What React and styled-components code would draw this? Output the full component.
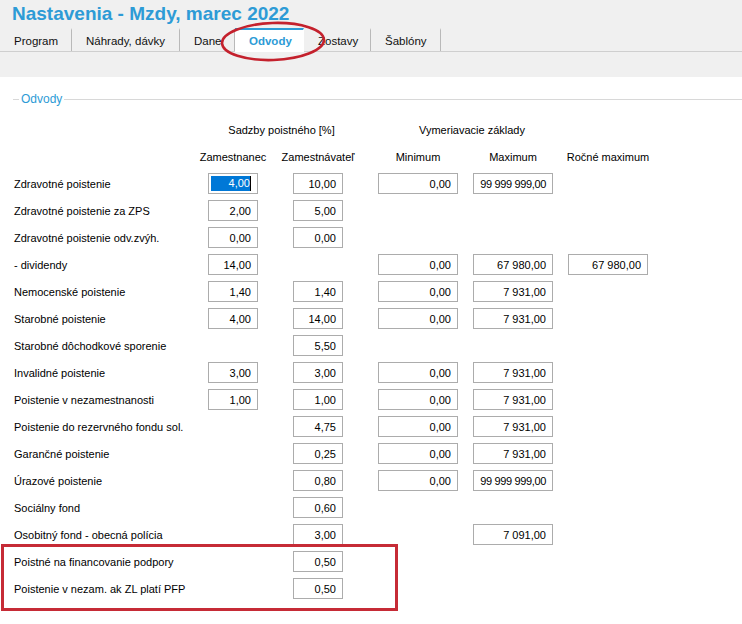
import React from "react";
import styled, { createGlobalStyle } from "styled-components";

const GlobalStyle = createGlobalStyle`
  body {
    margin: 0;
    background: #fff;
  }
`;

const BLUE = "#2d9bd6";

const Page = styled.div`
  position: relative;
  width: 742px;
  height: 624px;
  overflow: hidden;
  background: #fff;
  color: #000;
  font-family: "Liberation Sans", Arial, sans-serif;
`;

const Header = styled.header`
  background: #f0f0f0;
`;

const Title = styled.h1`
  margin: 0;
  height: 28px;
  padding-left: 12px;
  font-size: 19px;
  line-height: 28px;
  font-weight: bold;
  color: ${BLUE};
`;

const TabBar = styled.nav`
  display: flex;
  height: 23px;
  border-bottom: 1px solid #cfcfcf;
`;

const Tab = styled.div`
  width: ${(p) => p.$w}px;
  box-sizing: border-box;
  display: flex;
  align-items: center;
  padding-left: 14px;
  font-size: 11.5px;
  color: ${(p) => (p.$active ? BLUE : "#111")};
  font-weight: ${(p) => (p.$active ? "bold" : "normal")};
  background: ${(p) => (p.$active ? "#fff" : "transparent")};
  border-top: 2px solid ${(p) => (p.$active ? BLUE : "transparent")};
  border-right: 1px solid ${(p) => (p.$active ? "transparent" : "#b9b9b9")};
  margin-bottom: ${(p) => (p.$active ? "-1px" : "0")};
`;

const Band = styled.div`
  height: 25px;
  background: #f0f0f0;
`;

const Content = styled.section`
  padding-top: 15px;
`;

const GroupTitle = styled.div`
  display: flex;
  align-items: center;
  height: 14px;
  font-size: 12px;
  color: ${BLUE};
  &::before,
  &::after {
    content: "";
    height: 1px;
    background: #d8d8d8;
  }
  &::before {
    width: 6px;
    margin: 0 2px 0 13px;
  }
  &::after {
    flex: 1;
    margin-left: 2px;
  }
`;

const Grid = styled.div`
  display: grid;
  grid-template-columns: 194px 50px 85px 115px 95px 95px;
  grid-auto-rows: 27px;
  align-items: center;
  margin-top: 10px;
  padding-left: 14px;
  font-size: 11px;
`;

const Label = styled.div`
  grid-column: 1;
  white-space: nowrap;
`;

const GroupHead = styled.div`
  grid-column: ${(p) => p.$cols};
  justify-self: stretch;
  text-align: center;
  padding-left: ${(p) => p.$offset}px;
  white-space: nowrap;
`;

const ColHead = styled.div`
  grid-column: ${(p) => p.$col};
  justify-self: end;
  width: ${(p) => p.$w}px;
  display: flex;
  justify-content: center;
  white-space: nowrap;
`;

const Field = styled.div`
  grid-column: ${(p) => p.$col};
  justify-self: end;
  width: ${(p) => p.$w}px;
  height: 21px;
  box-sizing: border-box;
  border: 1px solid #acacac;
  background: #fff;
  display: flex;
  align-items: center;
  justify-content: flex-end;
  padding-right: 6px;
  white-space: nowrap;
  letter-spacing: ${(p) => (p.$tight ? "-0.35px" : "0")};
`;

const Selected = styled.span`
  flex: 1;
  height: 15px;
  margin-left: 2px;
  background: #0078d7;
  color: #fff;
  text-align: right;
  line-height: 15px;
  border-right: 1px solid #000;
`;

const Frame = styled.div`
  position: absolute;
  left: 1px;
  top: 544px;
  width: 397px;
  height: 67px;
  box-sizing: border-box;
  border: 3px solid #c62b36;
  pointer-events: none;
`;

const Circle = styled.svg`
  position: absolute;
  left: 218px;
  top: 19px;
  pointer-events: none;
`;

const tabs = [
  { name: "Program", w: 72 },
  { name: "Náhrady, dávky", w: 108 },
  { name: "Dane", w: 55 },
  { name: "Odvody", w: 69, active: true },
  { name: "Zostavy", w: 67 },
  { name: "Šablóny", w: 70 },
];

const widths = [50, 50, 80, 80, 80];

const rows = [
  ["Zdravotné poistenie", ["4,00", "10,00", "0,00", "99 999 999,00", null]],
  ["Zdravotné poistenie za ZPS", ["2,00", "5,00", null, null, null]],
  ["Zdravotné poistenie odv.zvýh.", ["0,00", "0,00", null, null, null]],
  ["- dividendy", ["14,00", null, "0,00", "67 980,00", "67 980,00"]],
  ["Nemocenské poistenie", ["1,40", "1,40", "0,00", "7 931,00", null]],
  ["Starobné poistenie", ["4,00", "14,00", "0,00", "7 931,00", null]],
  ["Starobné dôchodkové sporenie", [null, "5,50", null, null, null]],
  ["Invalidné poistenie", ["3,00", "3,00", "0,00", "7 931,00", null]],
  ["Poistenie v nezamestnanosti", ["1,00", "1,00", "0,00", "7 931,00", null]],
  ["Poistenie do rezervného fondu sol.", [null, "4,75", "0,00", "7 931,00", null]],
  ["Garančné poistenie", [null, "0,25", "0,00", "7 931,00", null]],
  ["Úrazové poistenie", [null, "0,80", "0,00", "99 999 999,00", null]],
  ["Sociálny fond", [null, "0,60", null, null, null]],
  ["Osobitný fond - obecná polícia", [null, "3,00", null, "7 091,00", null]],
  ["Poistné na financovanie podpory", [null, "0,50", null, null, null]],
  ["Poistenie v nezam. ak ZL platí PFP", [null, "0,50", null, null, null]],
];

function App() {
  return (
    <Page>
      <GlobalStyle />
      <Header>
        <Title>Nastavenia - Mzdy, marec 2022</Title>
        <TabBar>
          {tabs.map((t) => (
            <Tab key={t.name} $w={t.w} $active={t.active}>
              {t.name}
            </Tab>
          ))}
        </TabBar>
      </Header>
      <Band />
      <Content>
        <GroupTitle>Odvody</GroupTitle>
        <Grid>
          <GroupHead $cols="2 / 4" $offset={12}>
            Sadzby poistného [%]
          </GroupHead>
          <GroupHead $cols="4 / 6" $offset={48}>
            Vymeriavacie základy
          </GroupHead>

          <ColHead $col={2} $w={50}>Zamestnanec</ColHead>
          <ColHead $col={3} $w={50}>Zamestnávateľ</ColHead>
          <ColHead $col={4} $w={80}>Minimum</ColHead>
          <ColHead $col={5} $w={80}>Maximum</ColHead>
          <ColHead $col={6} $w={80}>Ročné maximum</ColHead>

          {rows.map(([label, values], r) => (
            <React.Fragment key={label}>
              <Label style={{ gridRow: r + 3 }}>{label}</Label>
              {values.map((v, c) =>
                v === null ? null : (
                  <Field
                    key={c}
                    $col={c + 2}
                    $w={widths[c]}
                    $tight={v.length > 10}
                    style={{ gridRow: r + 3 }}
                  >
                    {r === 0 && c === 0 ? <Selected>{v}</Selected> : v}
                  </Field>
                )
              )}
            </React.Fragment>
          ))}
        </Grid>
      </Content>

      <Circle width="112" height="46" viewBox="0 0 112 46">
        <ellipse
          cx="55"
          cy="22.5"
          rx="51"
          ry="18.5"
          fill="none"
          stroke="#c4212d"
          strokeWidth="2.6"
          transform="rotate(-2 55 22.5)"
        />
      </Circle>
      <Frame />
    </Page>
  );
}

export default App;
